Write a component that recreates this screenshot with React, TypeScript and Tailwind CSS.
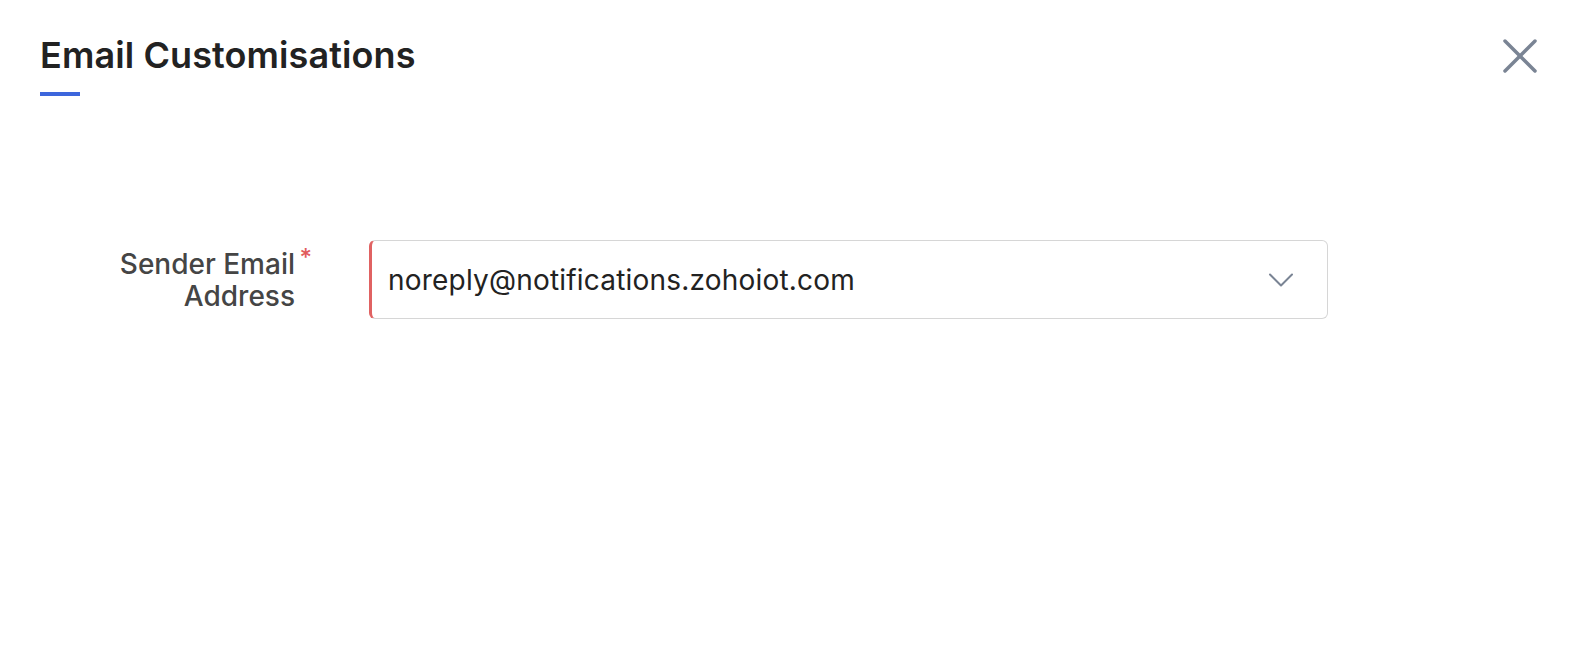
import { X, ChevronDown } from "lucide-react";

const App = () => {
  return (
    <div className="min-h-[648px] w-full bg-white font-['Inter',sans-serif]">
      <div className="flex items-start justify-between pl-10 pr-[32px] pt-[35px]">
        <div>
          <h1 className="text-[36px] font-semibold leading-[40px] tracking-[0.1px] text-[#222222]">
            Email Customisations
          </h1>
          <div className="mt-[17px] h-1 w-10 bg-[#3d66dc]" />
        </div>
        <button className="-mt-[9px] text-[#7a8494]">
          <X className="h-[60px] w-[60px]" strokeWidth={1.4} />
        </button>
      </div>

      <div className="mt-[144px] flex items-center pl-10">
        <div className="relative w-[255px] text-right text-[28px] font-medium leading-[32px] text-[#454545]">
          <span>Sender Email</span>
          <span className="absolute right-[-17px] top-[-6px] text-[24px] text-[#e25c5c]">*</span>
          <br />
          <span>Address</span>
        </div>
        <div className="ml-[74px] flex h-[79px] w-[959px] items-center justify-between rounded-md border border-[#d6d6d6] border-l-[3px] border-l-[#e06262] pl-[16px] pr-[24px]">
          <span className="text-[28px] leading-none tracking-[0.2px] text-[#222222]">noreply@notifications.zohoiot.com</span>
          <ChevronDown className="h-[44px] w-[44px] text-[#7a8494]" strokeWidth={1.1} />
        </div>
      </div>
    </div>
  );
};

export default App;
